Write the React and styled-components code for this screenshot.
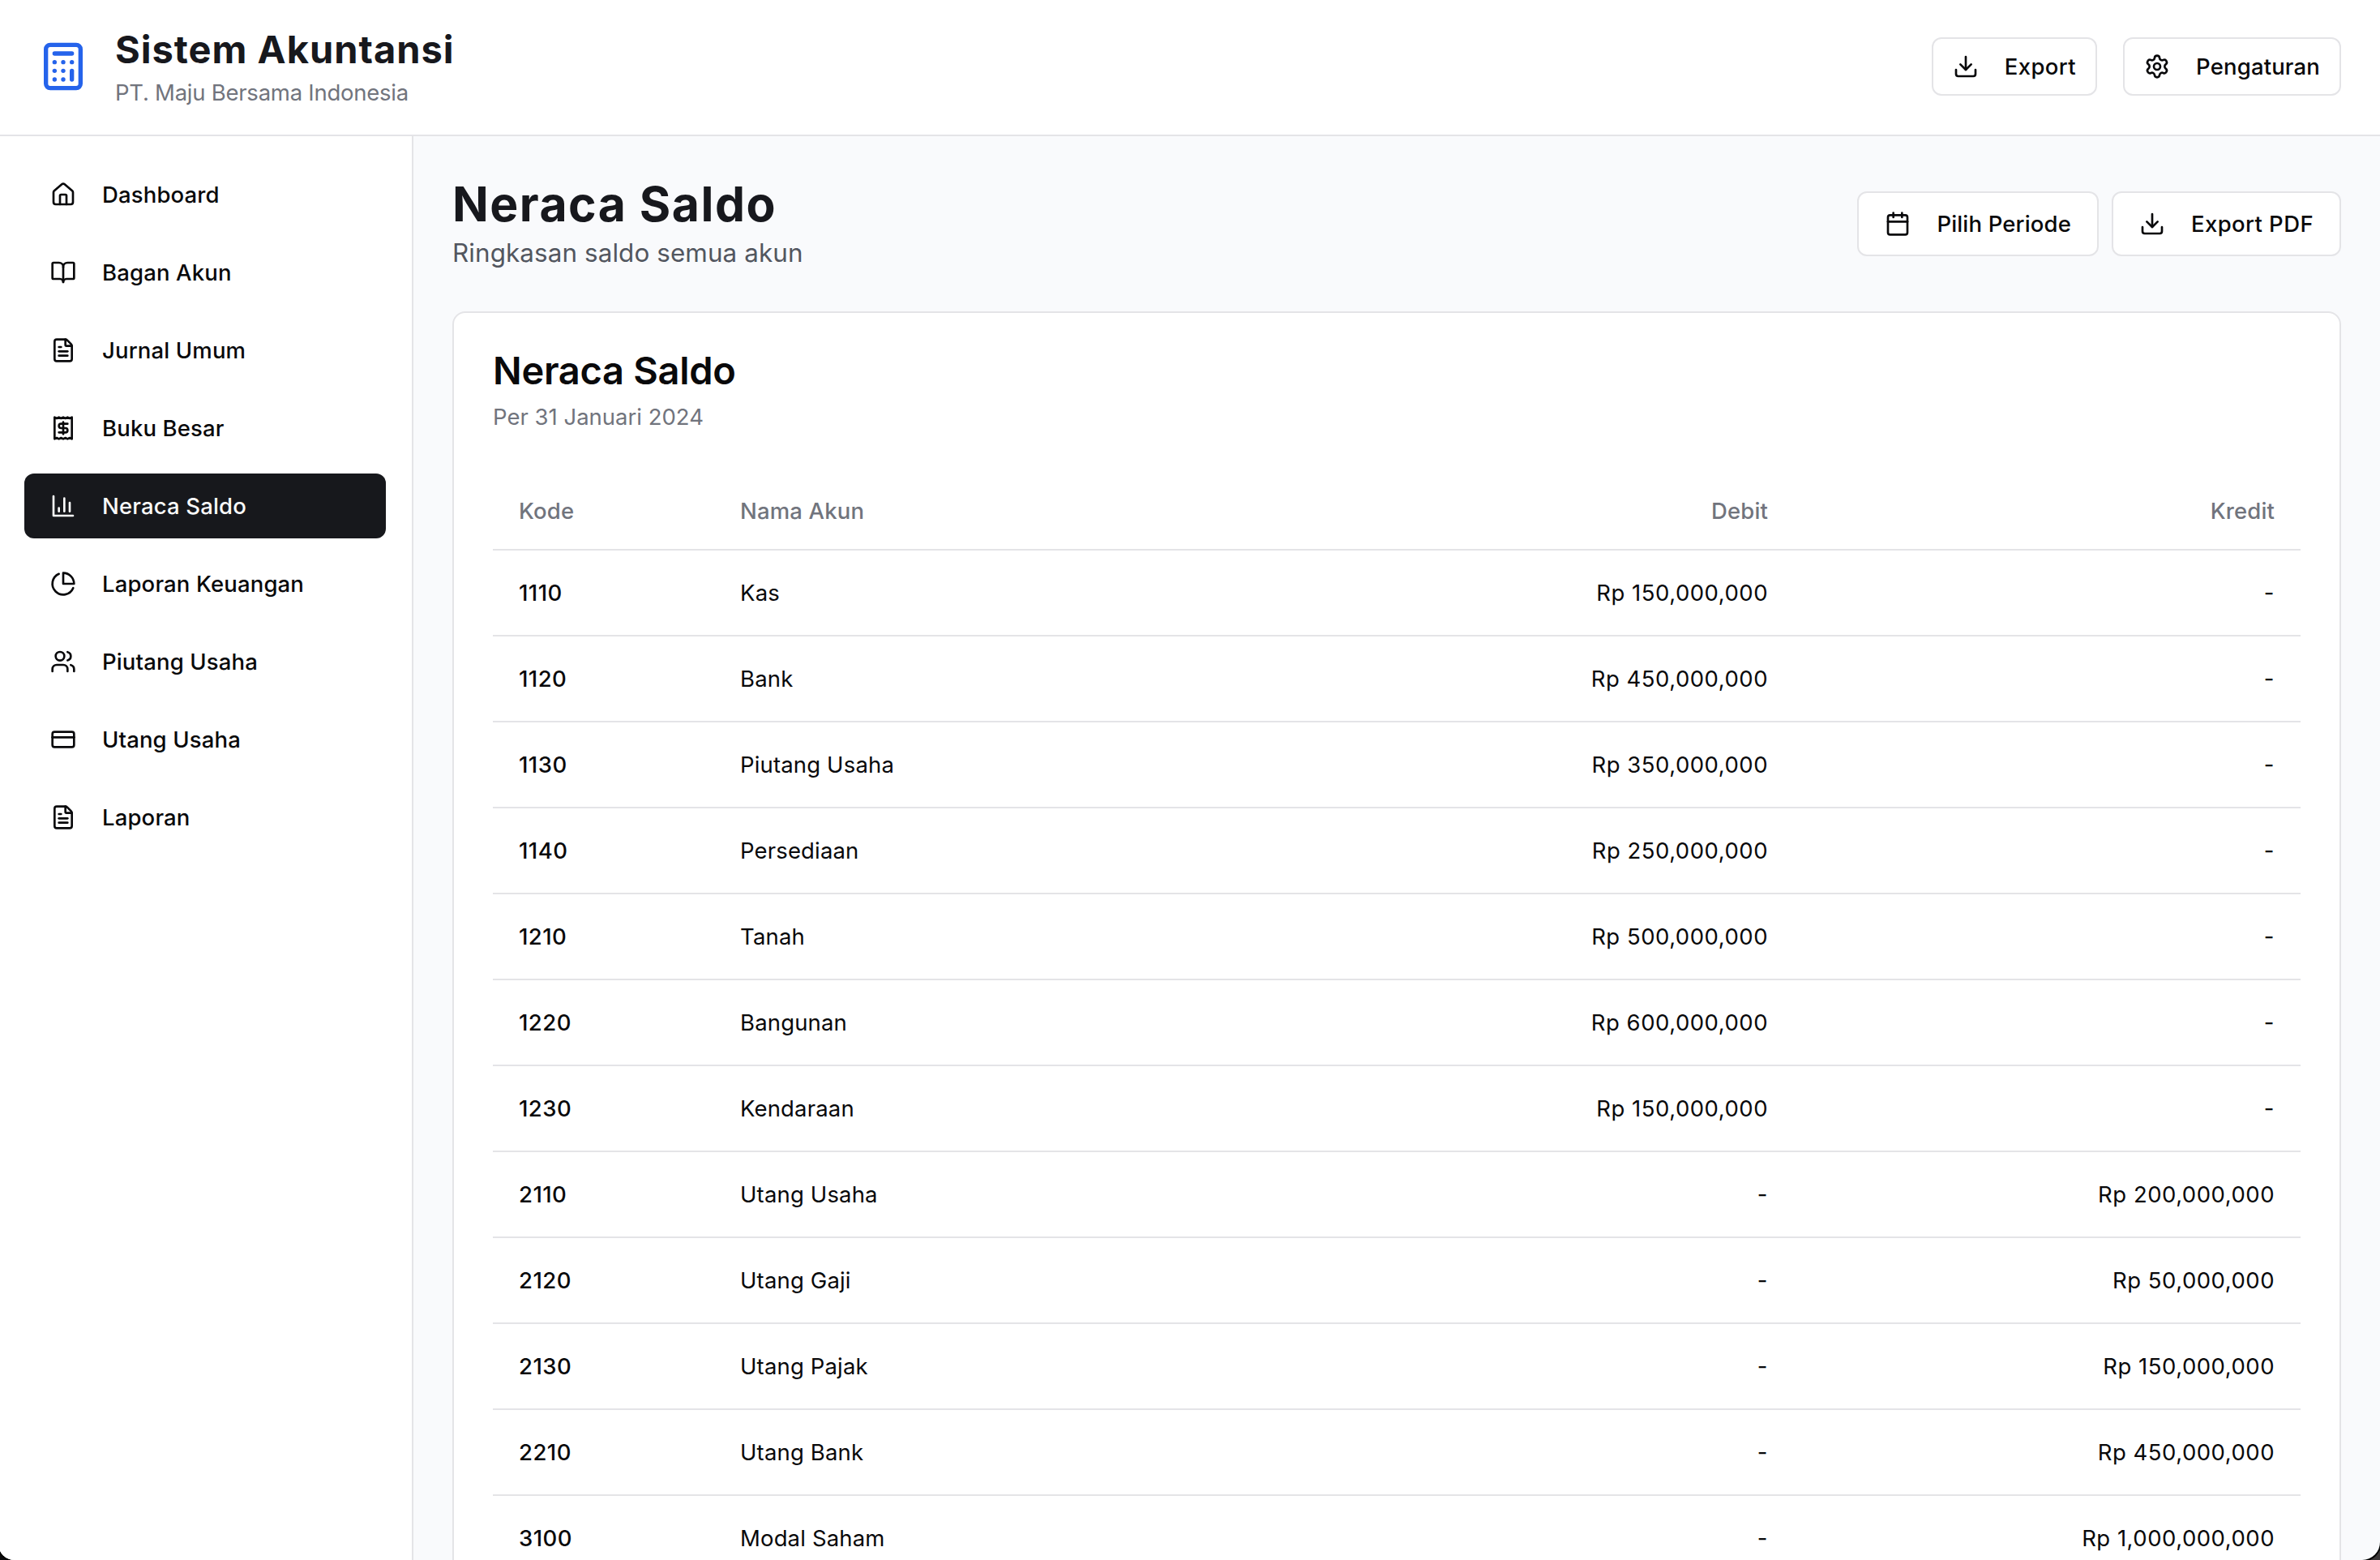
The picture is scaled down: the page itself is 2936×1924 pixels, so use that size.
import styled, { createGlobalStyle } from "styled-components";
import {
  BookOpen,
  Calculator,
  Calendar,
  CreditCard,
  Download,
  FileText,
  House,
  Settings,
  Users,
} from "lucide-react";

const GlobalStyle = createGlobalStyle`
  * {
    box-sizing: border-box;
    margin: 0;
    padding: 0;
  }
  body {
    background: linear-gradient(90deg, #0a0a0c 50%, #3a3738 50%);
    color: #09090b;
    font-family: Inter, "Liberation Sans", sans-serif;
    font-size: 27.5px;
    line-height: 40px;
    letter-spacing: 0.15px;
    overflow: hidden;
  }
`;

const Page = styled.div`
  display: flex;
  flex-direction: column;
  height: 1924px;
  margin-left: -2px;
  overflow: hidden;
  background-color: #f9fafc;
  border-radius: 0 0 22px 20px;
  box-shadow: 0 0 0 2px #000;
`;

const Header = styled.header`
  display: flex;
  align-items: center;
  justify-content: space-between;
  flex: none;
  height: 168px;
  padding: 0 48px 2px;
  background-color: #fff;
  border-bottom: 2px solid #e4e4e7;
`;

const Brand = styled.div`
  display: flex;
  align-items: center;
  gap: 32px;
  color: #2563eb;
`;

const BrandName = styled.h1`
  padding-bottom: 2px;
  font-size: 47px;
  line-height: 62px;
  font-weight: 700;
  letter-spacing: 1px;
  color: #17181d;
`;

const BrandCompany = styled.p`
  letter-spacing: -0.25px;
  color: #71747d;
`;

const Actions = styled.div`
  display: flex;
  gap: ${(props) => props.$gap}px;
`;

const Button = styled.button`
  display: flex;
  align-items: center;
  gap: 32px;
  height: ${(props) => (props.$small ? 72 : 80)}px;
  padding: 0 ${(props) => (props.$small ? 24 : 32)}px;
  border: 2px solid #e4e4e7;
  border-radius: 12px;
  background-color: #fff;
  color: #09090b;
  font-family: inherit;
  font-size: 27.5px;
  font-weight: 500;
  letter-spacing: ${(props) => props.$spacing}px;
  white-space: nowrap;
`;

const Body = styled.div`
  display: flex;
  flex: 1;
  min-height: 0;
`;

const Sidebar = styled.nav`
  display: flex;
  flex-direction: column;
  gap: 16px;
  flex: none;
  width: 512px;
  padding: 32px;
  background-color: #fff;
  border-right: 2px solid #e4e4e7;
`;

const NavItem = styled.a`
  display: flex;
  align-items: center;
  gap: 32px;
  height: 80px;
  padding: 0 32px;
  border-radius: 12px;
  font-weight: 500;
  background-color: ${(props) => (props.$active ? "#17181c" : "transparent")};
  color: ${(props) => (props.$active ? "#fafafa" : "#09090b")};
`;

const Main = styled.main`
  flex: 1;
  padding: 48px;
`;

const PageHeader = styled.div`
  display: flex;
  align-items: center;
  justify-content: space-between;
  margin-bottom: 48px;
`;

const PageTitle = styled.h2`
  font-size: 58.8px;
  line-height: 72px;
  font-weight: 700;
  letter-spacing: 1.5px;
  color: #17181d;
`;

const PageSubtitle = styled.p`
  font-size: 31.4px;
  line-height: 48px;
  letter-spacing: 0.1px;
  color: #52565f;
`;

const Card = styled.section`
  padding: 48px;
  background-color: #fff;
  border: 2px solid #e4e4e7;
  border-radius: 16px;
`;

const CardTitle = styled.h3`
  font-size: 47px;
  line-height: 46px;
  font-weight: 600;
  letter-spacing: -0.3px;
`;

const CardDescription = styled.p`
  margin-top: 14px;
  margin-bottom: 48px;
  letter-spacing: 0;
  color: #71747d;
`;

const Table = styled.table`
  width: 100%;
  table-layout: fixed;
  border-collapse: collapse;
`;

const Row = styled.tr`
  border-bottom: 2px solid #e4e4e7;
`;

const HeadCell = styled.th`
  width: ${(props) => props.$width}px;
  height: 96px;
  padding: 0 32px;
  font-weight: 500;
  text-align: ${(props) => (props.$right ? "right" : "left")};
  color: #71747d;
`;

const Cell = styled.td`
  height: 106px;
  padding: 0 32px;
`;

const CodeCell = styled(Cell)`
  font-weight: 500;
  letter-spacing: 0.45px;
`;

const AmountCell = styled(Cell)`
  text-align: right;
  letter-spacing: 0.5px;
`;

// Receipt with a torn edge and a dollar sign
function ReceiptIcon({ size }) {
  return (
    <svg
      width={size}
      height={size}
      viewBox="0 0 24 24"
      fill="none"
      stroke="currentColor"
      strokeWidth="2"
      strokeLinecap="round"
      strokeLinejoin="round"
    >
      <path d="M4 2v20l2-1 2 1 2-1 2 1 2-1 2 1 2-1 2 1V2l-2 1-2-1-2 1-2-1-2 1-2-1-2 1Z" />
      <path d="M16 8h-6a2 2 0 1 0 0 4h4a2 2 0 1 1 0 4H8" />
      <path d="M12 17.5v-11" />
    </svg>
  );
}

function BarChartIcon({ size }) {
  return (
    <svg
      width={size}
      height={size}
      viewBox="0 0 24 24"
      fill="none"
      stroke="currentColor"
      strokeWidth="2"
      strokeLinecap="round"
      strokeLinejoin="round"
    >
      <path d="M3 3v18h18" />
      <path d="M18 17V9" />
      <path d="M13 17V5" />
      <path d="M8 17v-3" />
    </svg>
  );
}

function PieChartIcon({ size }) {
  return (
    <svg
      width={size}
      height={size}
      viewBox="0 0 24 24"
      fill="none"
      stroke="currentColor"
      strokeWidth="2"
      strokeLinecap="round"
      strokeLinejoin="round"
    >
      <path d="M21.21 15.89A10 10 0 1 1 8 2.83" />
      <path d="M22 12A10 10 0 0 0 12 2v10z" />
    </svg>
  );
}

const menu = [
  { label: "Dashboard", icon: House },
  { label: "Bagan Akun", icon: BookOpen },
  { label: "Jurnal Umum", icon: FileText },
  { label: "Buku Besar", icon: ReceiptIcon },
  { label: "Neraca Saldo", icon: BarChartIcon },
  { label: "Laporan Keuangan", icon: PieChartIcon },
  { label: "Piutang Usaha", icon: Users },
  { label: "Utang Usaha", icon: CreditCard },
  { label: "Laporan", icon: FileText },
];

const accounts = [
  { code: "1110", name: "Kas", debit: 150000000, credit: 0 },
  { code: "1120", name: "Bank", debit: 450000000, credit: 0 },
  { code: "1130", name: "Piutang Usaha", debit: 350000000, credit: 0 },
  { code: "1140", name: "Persediaan", debit: 250000000, credit: 0 },
  { code: "1210", name: "Tanah", debit: 500000000, credit: 0 },
  { code: "1220", name: "Bangunan", debit: 600000000, credit: 0 },
  { code: "1230", name: "Kendaraan", debit: 150000000, credit: 0 },
  { code: "2110", name: "Utang Usaha", debit: 0, credit: 200000000 },
  { code: "2120", name: "Utang Gaji", debit: 0, credit: 50000000 },
  { code: "2130", name: "Utang Pajak", debit: 0, credit: 150000000 },
  { code: "2210", name: "Utang Bank", debit: 0, credit: 450000000 },
  { code: "3100", name: "Modal Saham", debit: 0, credit: 1000000000 },
];

function formatAmount(value) {
  return value > 0 ? `Rp ${value.toLocaleString("en-US")}` : "-";
}

export default function App() {
  return (
    <>
      <GlobalStyle />
      <Page>
        <Header>
          <Brand>
            <Calculator size={64} />
            <div>
              <BrandName>Sistem Akuntansi</BrandName>
              <BrandCompany>PT. Maju Bersama Indonesia</BrandCompany>
            </div>
          </Brand>
          <Actions $gap={32}>
            <Button $small $spacing={0.4}>
              <Download size={32} />
              Export
            </Button>
            <Button $small $spacing={0.15}>
              <Settings size={32} />
              Pengaturan
            </Button>
          </Actions>
        </Header>
        <Body>
          <Sidebar>
            {menu.map((item) => (
              <NavItem key={item.label} $active={item.label === "Neraca Saldo"}>
                <item.icon size={32} />
                {item.label}
              </NavItem>
            ))}
          </Sidebar>
          <Main>
            <PageHeader>
              <div>
                <PageTitle>Neraca Saldo</PageTitle>
                <PageSubtitle>Ringkasan saldo semua akun</PageSubtitle>
              </div>
              <Actions $gap={16}>
                <Button $spacing={0.15}>
                  <Calendar size={32} />
                  Pilih Periode
                </Button>
                <Button $spacing={0.4}>
                  <Download size={32} />
                  Export PDF
                </Button>
              </Actions>
            </PageHeader>
            <Card>
              <CardTitle>Neraca Saldo</CardTitle>
              <CardDescription>Per 31 Januari 2024</CardDescription>
              <Table>
                <thead>
                  <Row>
                    <HeadCell $width={273}>Kode</HeadCell>
                    <HeadCell $width={779}>Nama Akun</HeadCell>
                    <HeadCell $width={553} $right>
                      Debit
                    </HeadCell>
                    <HeadCell $width={625} $right>
                      Kredit
                    </HeadCell>
                  </Row>
                </thead>
                <tbody>
                  {accounts.map((account) => (
                    <Row key={account.code}>
                      <CodeCell>{account.code}</CodeCell>
                      <Cell>{account.name}</Cell>
                      <AmountCell>{formatAmount(account.debit)}</AmountCell>
                      <AmountCell>{formatAmount(account.credit)}</AmountCell>
                    </Row>
                  ))}
                </tbody>
              </Table>
            </Card>
          </Main>
        </Body>
      </Page>
    </>
  );
}
